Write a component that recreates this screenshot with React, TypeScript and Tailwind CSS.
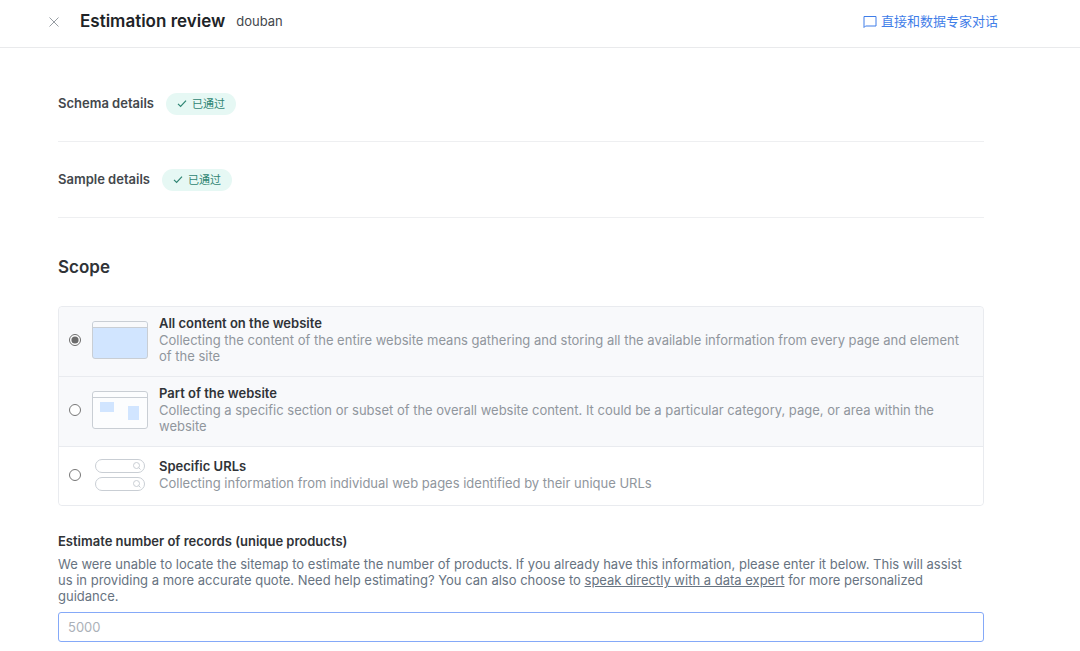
import { useState } from 'react';
import type { ReactNode } from 'react';

type Scope = 'all' | 'part' | 'urls';

function FullSiteArt() {
  return (
    <svg width="56" height="38" viewBox="0 0 56 38" fill="none" aria-hidden="true">
      <rect x="0.5" y="0.5" width="55" height="37" rx="2.5" fill="#d1e5ff" stroke="#c9ced4" />
      <path d="M1 6V3a2 2 0 0 1 2-2h50a2 2 0 0 1 2 2v3z" fill="#f8f9fb" />
      <path d="M1 6.5h54" stroke="#c9ced4" />
    </svg>
  );
}

function PartialSiteArt() {
  return (
    <svg width="56" height="38" viewBox="0 0 56 38" fill="none" aria-hidden="true">
      <rect x="0.5" y="0.5" width="55" height="37" rx="2.5" fill="#fcfdfe" stroke="#c9ced4" />
      <path d="M1 6.5h54" stroke="#c9ced4" />
      <rect x="8" y="11" width="14" height="10" fill="#d1e5ff" />
      <rect x="36" y="15" width="11" height="14" fill="#d1e5ff" />
    </svg>
  );
}

function UrlsArt() {
  return (
    <svg width="56" height="32" viewBox="0 0 56 32" fill="none" stroke="#c9ced4" aria-hidden="true">
      <rect x="3.5" y="0.5" width="49" height="13" rx="6.5" />
      <rect x="3.5" y="18.5" width="49" height="13" rx="6.5" />
      <circle cx="44.5" cy="6.5" r="3" />
      <path d="M46.7 8.7 48.5 10.5" />
      <circle cx="44.5" cy="24.5" r="3" />
      <path d="M46.7 26.7 48.5 28.5" />
    </svg>
  );
}

const options: { id: Scope; title: string; text: string; art: ReactNode }[] = [
  {
    id: 'all',
    title: 'All content on the website',
    text: 'Collecting the content of the entire website means gathering and storing all the available information from every page and element of the site',
    art: <FullSiteArt />,
  },
  {
    id: 'part',
    title: 'Part of the website',
    text: 'Collecting a specific section or subset of the overall website content. It could be a particular category, page, or area within the website',
    art: <PartialSiteArt />,
  },
  {
    id: 'urls',
    title: 'Specific URLs',
    text: 'Collecting information from individual web pages identified by their unique URLs',
    art: <UrlsArt />,
  },
];

function ReviewRow({ label }: { label: string }) {
  return (
    <section className="flex h-19 items-center gap-3 border-b border-[#eeeff1] pt-px">
      <h2 className="text-[13px] font-semibold text-[#43474c]">{label}</h2>
      <span className="flex h-[22px] items-center gap-[5px] rounded-full bg-[#e6f8f4] px-[11px] text-[11px] text-[#2f8573]">
        <svg width="10" height="10" viewBox="0 0 10 10" fill="none" stroke="currentColor" strokeWidth="1.2" aria-hidden="true">
          <path d="M1 4.9 3.6 7.5 9 1.7" />
        </svg>
        已通过
      </span>
    </section>
  );
}

export default function App() {
  const [scope, setScope] = useState<Scope>('all');
  const [records, setRecords] = useState('');

  return (
    <div className="bg-white font-['Inter','Noto_Sans_CJK_SC',sans-serif] text-[#303337]">
      <header className="flex h-12 items-center border-b border-[#e9eaec] pr-[82px] pb-1 pl-12">
        <button type="button" aria-label="Close" className="flex size-3 items-center justify-center text-[#979da3]">
          <svg width="10" height="10" viewBox="0 0 10 10" fill="none" stroke="currentColor">
            <path d="M0.5 0.5 9.5 9.5M9.5 0.5 0.5 9.5" />
          </svg>
        </button>
        <h1 className="ml-5 text-[17px] font-semibold text-[#202327]">Estimation review</h1>
        <span className="ml-[11px] text-[13px] text-[#43474c]">douban</span>
        <a href="#expert" className="ml-auto flex items-center gap-1 text-[13px] text-[#3f7de8]">
          <svg width="14" height="14" viewBox="0 0 14 14" fill="none" stroke="currentColor" aria-hidden="true">
            <path d="M1 12.5v-11h12v9.5H2.5z" />
          </svg>
          直接和数据专家对话
        </a>
      </header>

      <main className="pt-[18px] pr-24 pb-2 pl-[58px]">
        <ReviewRow label="Schema details" />
        <ReviewRow label="Sample details" />

        <h2 id="scope-heading" className="mt-[37px] text-[17px] leading-6 font-semibold">
          Scope
        </h2>

        <fieldset
          aria-labelledby="scope-heading"
          className="mt-[27px] overflow-hidden rounded-sm border border-[#e9ebef]"
        >
          {options.map((option) => (
            <label
              key={option.id}
              className="flex items-center border-b border-[#e9ebef] bg-[#f8f9fb] pt-2 pr-4 pb-3 pl-[10px] last:border-b-0 last:bg-white last:pt-[11px] last:pb-[14px]"
            >
              <input
                type="radio"
                name="scope"
                value={option.id}
                checked={scope === option.id}
                onChange={() => setScope(option.id)}
                className="size-3 shrink-0 accent-[#6b6b6b]"
              />
              <span className="mx-[11px] shrink-0">{option.art}</span>
              <span className="text-[13px] leading-4">
                <span className="block leading-[17px] font-semibold">{option.title}</span>
                <span className="block text-[#90969d]">{option.text}</span>
              </span>
            </label>
          ))}
        </fieldset>

        <label htmlFor="records" className="mt-[27px] block text-[13px] leading-4 font-semibold">
          Estimate number of records (unique products)
        </label>
        <p className="mt-[7px] pr-3 text-[13px] leading-4 text-[#677381]">
          We were unable to locate the sitemap to estimate the number of products. If you already have this
          information, please enter it below. This will assist us in providing a more accurate quote. Need help
          estimating? You can also choose to{' '}
          <a href="#expert" className="underline">
            speak directly with a data expert
          </a>{' '}
          for more personalized guidance.
        </p>
        <input
          id="records"
          type="text"
          inputMode="numeric"
          placeholder="5000"
          value={records}
          onChange={(e) => setRecords(e.target.value)}
          className="mt-2 block h-[30px] w-full rounded-[3px] border border-[#85a9f8] px-[9px] text-[13px] outline-none placeholder:text-[#abb1b8]"
        />
      </main>
    </div>
  );
}
